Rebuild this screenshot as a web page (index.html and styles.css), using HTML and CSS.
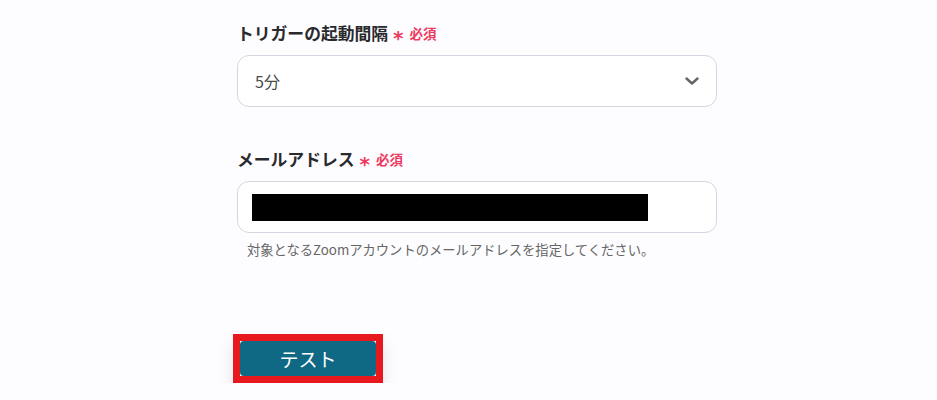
FILE: index.html
```html
<!DOCTYPE html>
<html lang="ja">
<head>
<meta charset="utf-8">
<link rel="stylesheet" href="styles.css">
</head>
<body>
<main class="form">
  <div class="field">
    <div class="label">トリガーの起動間隔<span class="req"><span class="ast">*</span>必須</span></div>
    <div class="select">
      <span class="value">5分</span>
      <svg class="chev" width="14" height="8" viewBox="0 0 14 8"><path d="M1.5 1.5 L7 6.5 L12.5 1.5" fill="none" stroke="#666" stroke-width="2.4" stroke-linecap="round" stroke-linejoin="round"/></svg>
    </div>
  </div>
  <div class="field field-mail">
    <div class="label">メールアドレス<span class="req"><span class="ast">*</span>必須</span></div>
    <div class="input"><span class="redact"></span></div>
    <p class="help">対象となるZoomアカウントのメールアドレスを指定してください。</p>
  </div>
  <div class="actions">
    <div class="highlight"><button class="btn">テスト</button></div>
  </div>
</main>
</body>
</html>
```

FILE: styles.css
```css
html, body {
  margin: 0;
  padding: 0;
  background: #fdfdff;
}
body {
  font-family: "Noto Sans CJK JP", "Noto Sans", sans-serif;
  color: #222;
}
.form {
  width: 480px;
  padding: 21px 0 0 237px;
}
.field-mail {
  margin-top: 40px;
}
.label {
  display: flex;
  align-items: center;
  font-size: 16.8px;
  font-weight: 700;
  line-height: 24px;
  color: #2a2a2e;
  margin-bottom: 10px;
}
.req {
  display: inline-flex;
  align-items: center;
  margin-left: 5px;
  color: #ee3a5e;
  font-size: 13.5px;
  font-weight: 700;
}
.ast {
  font-family: "DejaVu Sans", sans-serif;
  font-size: 20px;
  font-weight: 700;
  line-height: 1;
  margin-right: 6px;
  position: relative;
  top: 5px;
}
.select, .input {
  box-sizing: border-box;
  height: 52px;
  border: 1px solid #d6d6e2;
  border-radius: 12px;
  background: #fff;
  display: flex;
  align-items: center;
}
.select {
  justify-content: space-between;
  padding: 0 17px 0 17px;
}
.value {
  font-size: 16px;
  color: #4a4a4a;
}
.input {
  padding-left: 14px;
}
.redact {
  display: block;
  width: 396px;
  height: 27px;
  background: #000;
}
.help {
  margin: 8px 0 0 10px;
  font-size: 13.3px;
  line-height: 18px;
  color: #666;
}
.actions {
  margin-top: 75px;
  margin-left: -4px;
}
.highlight {
  display: inline-block;
  border: 7px solid #e8181f;
  box-shadow: 0 8px 16px rgba(60, 60, 100, 0.12);
}
.btn {
  display: block;
  width: 136px;
  height: 35px;
  border: none;
  border-radius: 4px;
  background: #0f6984;
  color: #fff;
  font-family: "Noto Sans CJK JP", sans-serif;
  font-size: 19px;
  line-height: 35px;
  padding: 0;
}
```
